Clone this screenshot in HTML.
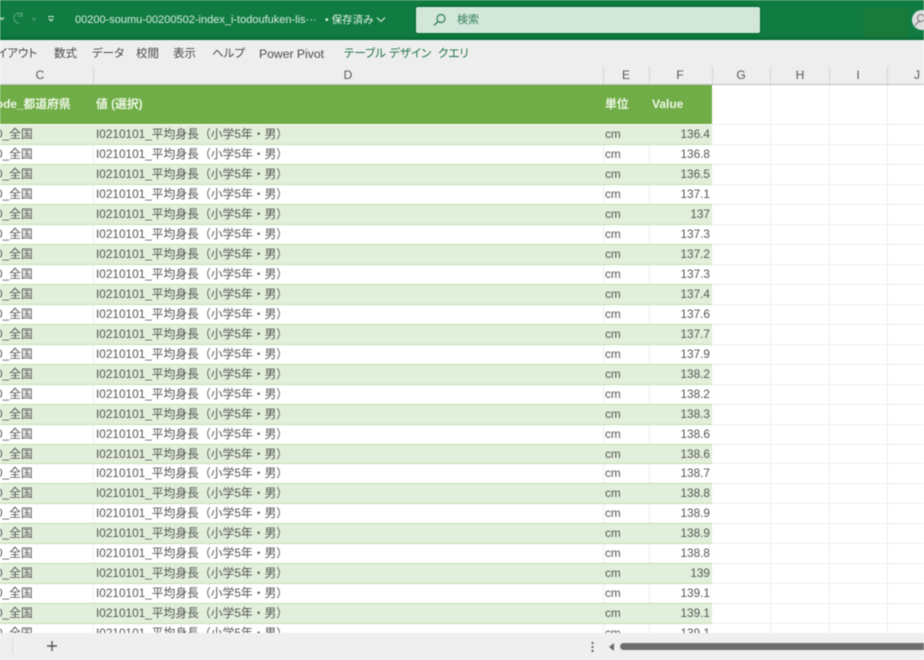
<!DOCTYPE html>
<html lang="ja">
<head>
<meta charset="utf-8">
<style>
html,body{margin:0;padding:0;width:924px;height:660px;overflow:hidden;background:#fff}
body{position:relative;font-family:"Liberation Sans","Noto Sans CJK JP",sans-serif;color:#555}
.a{position:absolute;white-space:nowrap}
#wrap{position:absolute;left:0;top:0;width:924px;height:660px;overflow:hidden;filter:blur(.45px)}
#title{left:0;top:0;width:924px;height:37px;background:#107c41;border-bottom:3px solid #0a6e38}
#ribbon{left:0;top:40px;width:924px;height:25px;background:#eeeeee}
#ribbon span{position:absolute;top:6px;font-size:11.5px;line-height:15px;color:#4a4a4a;font-feature-settings:"palt"}
#ch{left:0;top:65px;width:924px;height:20px;background:#eeeeee}
#ch span{position:absolute;top:2px;font-size:12px;line-height:16px;color:#555;transform:translateX(-50%)}
#ch i{position:absolute;top:1px;width:1px;height:19px;background:#d4d4d4}
#hl{left:0;top:84px;width:924px;height:1px;background:#bdbdbd}
#head{left:0;top:85px;width:712px;height:39px;background:#70ad47;color:#eef6e8;font-size:11.8px;font-weight:bold}
#head span{position:absolute;top:12px;line-height:15px}
#grid i{position:absolute;top:85px;width:1px;height:548px;background:#ececec}
#rows{left:0;top:125px;width:924px}
.r{position:relative;height:20px;box-sizing:border-box;width:712px;font-size:11.8px;line-height:19px;background:#fff;border-bottom:1px solid #c3dfb0;overflow:hidden}
.r.g{background:#e2efda}
.r span{position:absolute;top:0;white-space:nowrap}
.r .c{left:-4px;width:90px}
.r .d{left:96px}
.r .e{left:605px}
.r .f{right:2px;font-size:11.8px}
.r::before{content:"";position:absolute;left:92.5px;top:0;bottom:0;width:1px;background:#ededed}
.r::after{content:"";position:absolute;left:648.5px;top:0;bottom:0;width:1px;background:#ededed}
.r b{position:absolute;left:602.5px;top:0;bottom:0;width:1px;background:#ededed}
.r.g::before,.r.g::after,.r.g b{background:transparent}
.h{position:absolute;left:712px;width:212px;height:1px;background:#ececec}
#bot{left:0;top:633px;width:924px;height:27px;background:#efefef}
</style>
</head>
<body>
<div id="wrap">
<div id="grid">
<i style="left:770px"></i><i style="left:829px"></i><i style="left:887px"></i>
</div>
<div class="h" style="top:124px"></div><div class="h" style="top:144px"></div><div class="h" style="top:164px"></div><div class="h" style="top:184px"></div><div class="h" style="top:204px"></div><div class="h" style="top:224px"></div><div class="h" style="top:244px"></div><div class="h" style="top:264px"></div><div class="h" style="top:284px"></div><div class="h" style="top:304px"></div><div class="h" style="top:324px"></div><div class="h" style="top:344px"></div><div class="h" style="top:364px"></div><div class="h" style="top:384px"></div><div class="h" style="top:404px"></div><div class="h" style="top:424px"></div><div class="h" style="top:444px"></div><div class="h" style="top:463px"></div><div class="h" style="top:483px"></div><div class="h" style="top:503px"></div><div class="h" style="top:523px"></div><div class="h" style="top:543px"></div><div class="h" style="top:563px"></div><div class="h" style="top:583px"></div><div class="h" style="top:603px"></div><div class="h" style="top:623px"></div>

<div id="rows" class="a">
<div class="r g"><span class="c">0_全国</span><b></b><span class="d">I0210101_平均身長（小学5年・男）</span><span class="e">cm</span><span class="f">136.4</span></div>
<div class="r"><span class="c">0_全国</span><b></b><span class="d">I0210101_平均身長（小学5年・男）</span><span class="e">cm</span><span class="f">136.8</span></div>
<div class="r g"><span class="c">0_全国</span><b></b><span class="d">I0210101_平均身長（小学5年・男）</span><span class="e">cm</span><span class="f">136.5</span></div>
<div class="r"><span class="c">0_全国</span><b></b><span class="d">I0210101_平均身長（小学5年・男）</span><span class="e">cm</span><span class="f">137.1</span></div>
<div class="r g"><span class="c">0_全国</span><b></b><span class="d">I0210101_平均身長（小学5年・男）</span><span class="e">cm</span><span class="f">137</span></div>
<div class="r"><span class="c">0_全国</span><b></b><span class="d">I0210101_平均身長（小学5年・男）</span><span class="e">cm</span><span class="f">137.3</span></div>
<div class="r g"><span class="c">0_全国</span><b></b><span class="d">I0210101_平均身長（小学5年・男）</span><span class="e">cm</span><span class="f">137.2</span></div>
<div class="r"><span class="c">0_全国</span><b></b><span class="d">I0210101_平均身長（小学5年・男）</span><span class="e">cm</span><span class="f">137.3</span></div>
<div class="r g"><span class="c">0_全国</span><b></b><span class="d">I0210101_平均身長（小学5年・男）</span><span class="e">cm</span><span class="f">137.4</span></div>
<div class="r"><span class="c">0_全国</span><b></b><span class="d">I0210101_平均身長（小学5年・男）</span><span class="e">cm</span><span class="f">137.6</span></div>
<div class="r g"><span class="c">0_全国</span><b></b><span class="d">I0210101_平均身長（小学5年・男）</span><span class="e">cm</span><span class="f">137.7</span></div>
<div class="r"><span class="c">0_全国</span><b></b><span class="d">I0210101_平均身長（小学5年・男）</span><span class="e">cm</span><span class="f">137.9</span></div>
<div class="r g"><span class="c">0_全国</span><b></b><span class="d">I0210101_平均身長（小学5年・男）</span><span class="e">cm</span><span class="f">138.2</span></div>
<div class="r"><span class="c">0_全国</span><b></b><span class="d">I0210101_平均身長（小学5年・男）</span><span class="e">cm</span><span class="f">138.2</span></div>
<div class="r g"><span class="c">0_全国</span><b></b><span class="d">I0210101_平均身長（小学5年・男）</span><span class="e">cm</span><span class="f">138.3</span></div>
<div class="r"><span class="c">0_全国</span><b></b><span class="d">I0210101_平均身長（小学5年・男）</span><span class="e">cm</span><span class="f">138.6</span></div>
<div class="r g" style="height:19px"><span class="c">0_全国</span><b></b><span class="d">I0210101_平均身長（小学5年・男）</span><span class="e">cm</span><span class="f">138.6</span></div>
<div class="r"><span class="c">0_全国</span><b></b><span class="d">I0210101_平均身長（小学5年・男）</span><span class="e">cm</span><span class="f">138.7</span></div>
<div class="r g"><span class="c">0_全国</span><b></b><span class="d">I0210101_平均身長（小学5年・男）</span><span class="e">cm</span><span class="f">138.8</span></div>
<div class="r"><span class="c">0_全国</span><b></b><span class="d">I0210101_平均身長（小学5年・男）</span><span class="e">cm</span><span class="f">138.9</span></div>
<div class="r g"><span class="c">0_全国</span><b></b><span class="d">I0210101_平均身長（小学5年・男）</span><span class="e">cm</span><span class="f">138.9</span></div>
<div class="r"><span class="c">0_全国</span><b></b><span class="d">I0210101_平均身長（小学5年・男）</span><span class="e">cm</span><span class="f">138.8</span></div>
<div class="r g"><span class="c">0_全国</span><b></b><span class="d">I0210101_平均身長（小学5年・男）</span><span class="e">cm</span><span class="f">139</span></div>
<div class="r"><span class="c">0_全国</span><b></b><span class="d">I0210101_平均身長（小学5年・男）</span><span class="e">cm</span><span class="f">139.1</span></div>
<div class="r g"><span class="c">0_全国</span><b></b><span class="d">I0210101_平均身長（小学5年・男）</span><span class="e">cm</span><span class="f">139.1</span></div>
<div class="r"><span class="c">0_全国</span><b></b><span class="d">I0210101_平均身長（小学5年・男）</span><span class="e">cm</span><span class="f">139.1</span></div>
</div>

<div id="head" class="a">
<span style="left:-4px;top:12px">ode_都道府県</span>
<span style="left:96px">値 (選択)</span>
<span style="left:605px">単位</span>
<span style="left:652px;font-size:12px">Value</span>
</div>

<div id="title" class="a"></div>
<svg class="a" style="left:0;top:0" width="80" height="40" viewBox="0 0 80 40" fill="none">
<path d="M0 17.5l2 2 2-2" stroke="#d6e9dd" stroke-width="1.2"/>
<path d="M22 14.5c-4-3-8 0-8 3.5 0 2.500 2 4.500 4.500 6M22 12v4h-4" stroke="#5fa77e" stroke-width="1.1"/>
<path d="M32 18l2 2 2-2" stroke="#5fa77e" stroke-width="1"/>
<path d="M48 16.500h6M48.800 18.500l2.200 2.500 2.200-2.500" stroke="#d6e9dd" stroke-width="1.100"/>
</svg>
<div class="a" style="left:75px;top:12px;font-size:11px;line-height:16px;color:#d9ece1">00200-soumu-00200502-index_i-todoufuken-lis···</div>
<div class="a" style="left:325px;top:12px;font-size:10.500px;line-height:16px;color:#e6f2eb">• 保存済み</div>
<svg class="a" style="left:376px;top:16px" width="10" height="8" fill="none"><path d="M1 1.500l4 4 4-4" stroke="#e6f2eb" stroke-width="1.100"/></svg>
<div class="a" style="left:416px;top:7px;width:344px;height:26px;background:#d2e6da;border-radius:2px;box-shadow:0 0 0 2px #0c6f39"></div>
<svg class="a" style="left:432px;top:12px" width="16" height="16" fill="none"><circle cx="9" cy="6.500" r="4" stroke="#2f7d54" stroke-width="1.200"/><path d="M6 9.500l-4 4" stroke="#2f7d54" stroke-width="1.300"/></svg>
<div class="a" style="left:457px;top:12px;font-size:11px;line-height:16px;color:#35815a">検索</div>
<div class="a" style="left:863px;top:8px;width:45px;height:29px;background:#1a7a3a"></div>
<div class="a" style="left:912px;top:10px;width:20px;height:20px;border-radius:50%;background:#dedede"></div>
<svg class="a" style="left:912px;top:10px" width="12" height="20" fill="none"><circle cx="9" cy="8" r="3.500" stroke="#777" stroke-width="1.100"/><path d="M3 16c1-3 3-4.500 6-4.500" stroke="#777" stroke-width="1.100"/></svg>

<div id="ribbon" class="a">
<span style="left:-13px;top:7px">レイアウト</span>
<span style="left:54px;top:7px">数式</span>
<span style="left:92px;top:7px">データ</span>
<span style="left:136px;top:7px">校閲</span>
<span style="left:173px;top:7px">表示</span>
<span style="left:212px;top:7px">ヘルプ</span>
<span style="left:259px;top:7px;font-size:12.200px">Power Pivot</span>
<span style="left:344px;top:7px;color:#217346">テーブル デザイン</span>
<span style="left:438px;top:7px;color:#217346">クエリ</span>
</div>

<div id="ch" class="a">
<i style="left:93px"></i><i style="left:603px"></i><i style="left:649px"></i><i style="left:712px"></i><i style="left:770px"></i><i style="left:829px"></i><i style="left:887px"></i>
<span style="left:40px">C</span>
<span style="left:348px">D</span>
<span style="left:626px">E</span>
<span style="left:680px">F</span>
<span style="left:741px">G</span>
<span style="left:800px">H</span>
<span style="left:858px">I</span>
<span style="left:917px">J</span>
</div>
<div id="hl" class="a"></div>

<div id="bot" class="a"></div>
<div class="a" style="left:12px;top:638px;width:1px;height:16px;background:#dcdcdc"></div>
<svg class="a" style="left:46px;top:640px" width="12" height="12"><path d="M1 6h10M6 1v10" stroke="#555" stroke-width="1.400"/></svg>
<svg class="a" style="left:588px;top:640px" width="10" height="14"><rect x="3.500" y="2" width="2" height="2" fill="#666"/><rect x="3.500" y="6" width="2" height="2" fill="#666"/><rect x="3.500" y="10" width="2" height="2" fill="#666"/></svg>
<svg class="a" style="left:608px;top:642px" width="8" height="10"><path d="M1 5l5-4v8z" fill="#666"/></svg>
<div class="a" style="left:620px;top:643px;width:320px;height:7px;border-radius:4px;background:#6e6e6e"></div>
</div>
</body>
</html>
